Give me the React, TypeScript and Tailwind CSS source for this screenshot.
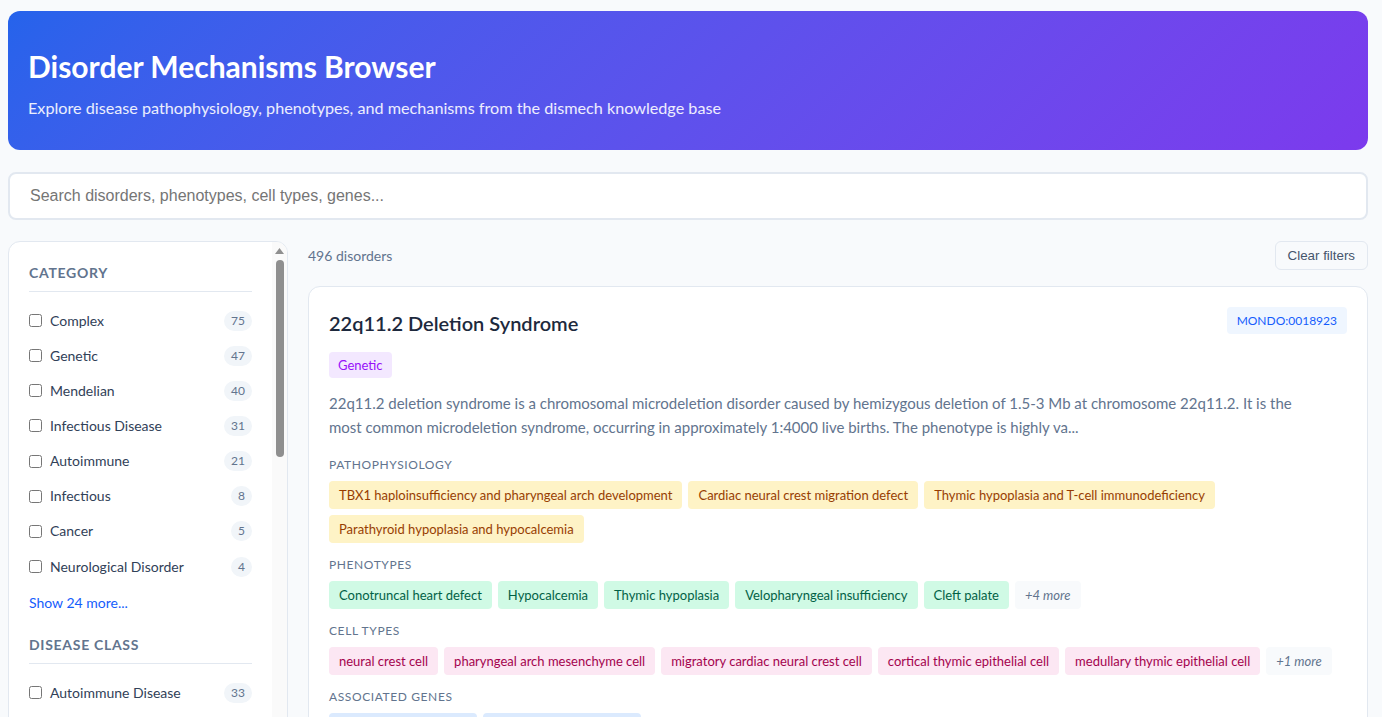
import React from "react";

type Item = [string, number];

const sections: { title: string; items: Item[]; more: number }[] = [
  {
    title: "Category",
    items: [
      ["Complex", 75],
      ["Genetic", 47],
      ["Mendelian", 40],
      ["Infectious Disease", 31],
      ["Autoimmune", 21],
      ["Infectious", 8],
      ["Cancer", 5],
      ["Neurological Disorder", 4],
    ],
    more: 24,
  },
  {
    title: "Disease Class",
    items: [
      ["Autoimmune Disease", 33],
      ["Cardiovascular Disease", 28],
      ["Metabolic Disease", 24],
      ["Neurodegenerative", 19],
      ["Immunodeficiency", 15],
      ["Developmental", 12],
      ["Respiratory Disease", 9],
      ["Skin Disease", 6],
    ],
    more: 41,
  },
  {
    title: "Inheritance",
    items: [
      ["Autosomal Dominant", 88],
      ["Autosomal Recessive", 72],
      ["X-linked Recessive", 21],
      ["Multifactorial", 18],
      ["X-linked Dominant", 7],
      ["Mitochondrial", 6],
      ["Sporadic", 5],
      ["Somatic", 3],
    ],
    more: 5,
  },
];

function Tag({ children, cls }: { children: React.ReactNode; cls: string }) {
  return <span className={"rounded px-2.5 py-1 text-[13px] leading-5 " + cls}>{children}</span>;
}

function Section({ label, children, first }: { label: string; children: React.ReactNode; first?: boolean }) {
  return (
    <div className={first ? "" : "mt-3.5"}>
      <div className="mb-2 text-xs leading-4 uppercase tracking-wider text-slate-500">{label}</div>
      <div className="flex flex-wrap gap-1.5">{children}</div>
    </div>
  );
}

function FakeScrollbar() {
  return (
    <div className="flex w-[15px] shrink-0 flex-col items-center bg-[#fafafa] pt-[6px]">
      <svg width="9" height="6" viewBox="0 0 9 6" className="block">
        <path d="M4.5 0 L9 6 L0 6 Z" fill="#8f8f8f" />
      </svg>
      <div className="mt-[6px] h-[197px] w-2 rounded-full bg-[#8f8f8f]" />
    </div>
  );
}

export default function App() {
  const amber = "bg-amber-100 text-amber-800";
  const green = "bg-emerald-100 text-emerald-800";
  const pink = "bg-pink-100 text-pink-800";
  const more = "bg-slate-50 text-slate-500 italic";
  const blue = "bg-blue-100 text-blue-800";

  return (
    <div className="h-screen overflow-hidden bg-[#f8fafc] pt-[11px] pl-2 pr-[14px] font-['Lato',sans-serif]">
      <header className="rounded-xl bg-linear-135 from-[#2563eb] to-[#7c3aed] px-5 pt-[35px] pb-[30px] text-white">
        <h1 className="text-3xl font-bold leading-10">Disorder Mechanisms Browser</h1>
        <p className="mt-[10px] text-[16.2px] leading-6 text-white/90">
          Explore disease pathophysiology, phenotypes, and mechanisms from the dismech knowledge base
        </p>
      </header>

      <input
        type="text"
        placeholder="Search disorders, phenotypes, cell types, genes..."
        className="mt-[22px] block h-12 w-full rounded-lg border-2 border-slate-200 bg-white px-5 font-['Liberation_Sans',Arial,sans-serif] text-base text-slate-700 outline-none placeholder:text-[#757575]"
      />

      <div className="mt-[21px] flex items-start gap-5">
        <aside className="flex h-[685px] w-[280px] shrink-0 overflow-hidden rounded-xl border border-slate-200 bg-white">
          <div className="min-w-0 flex-1 px-5 pt-[21px] pb-5">
            {sections.map((s, si) => (
              <div key={s.title} className={si === 0 ? "" : "mt-[22px]"}>
                <h3 className="border-b border-slate-200 pb-2 text-sm leading-5 font-bold uppercase tracking-wider text-slate-500">
                  {s.title}
                </h3>
                <ul className="mt-[11px]">
                  {s.items.map(([name, n]) => (
                    <li key={name} className="flex h-[35.15px] items-center justify-between">
                      <label className="flex items-center gap-2 text-sm leading-5 text-slate-700">
                        <input type="checkbox" className="m-0 h-[13px] w-[13px]" />
                        {name}
                      </label>
                      <span className="rounded-full bg-slate-100 px-[7px] py-0.5 text-xs leading-4 text-slate-500">
                        {n}
                      </span>
                    </li>
                  ))}
                </ul>
                <div className="mt-[9px] text-sm leading-5 text-blue-600">Show {s.more} more...</div>
              </div>
            ))}
          </div>
          <FakeScrollbar />
        </aside>

        <main className="min-w-0 flex-1">
          <div className="flex h-[29px] items-center justify-between">
            <span className="text-sm leading-5 text-slate-500">496 disorders</span>
            <button className="rounded-md border border-slate-200 bg-[#f8fafc] px-3 py-1.5 font-['Liberation_Sans',Arial,sans-serif] text-[13.33px] leading-[15px] text-slate-600">
              Clear filters
            </button>
          </div>

          <div className="mt-4 rounded-xl border border-slate-200 bg-white p-5">
            <div className="flex items-start justify-between">
              <h2 className="mt-[2px] text-xl leading-7 font-semibold text-slate-800">22q11.2 Deletion Syndrome</h2>
              <span className="rounded bg-blue-50 px-2.5 py-1 text-xs leading-[19px] text-blue-600">MONDO:0018923</span>
            </div>
            <div className="mt-[15px]">
              <span className="inline-block rounded bg-purple-100 px-[9px] py-1 text-[13px] leading-[18px] text-purple-600">
                Genetic
              </span>
            </div>
            <p className="mt-[13px] mb-[18px] max-w-[985px] text-[15px] leading-6 text-slate-500">
              22q11.2 deletion syndrome is a chromosomal microdeletion disorder caused by hemizygous deletion of 1.5-3 Mb at
              chromosome 22q11.2. It is the most common microdeletion syndrome, occurring in approximately 1:4000 live
              births. The phenotype is highly va...
            </p>

            <Section label="Pathophysiology" first>
              <Tag cls={amber}>TBX1 haploinsufficiency and pharyngeal arch development</Tag>
              <Tag cls={amber}>Cardiac neural crest migration defect</Tag>
              <Tag cls={amber}>Thymic hypoplasia and T-cell immunodeficiency</Tag>
              <Tag cls={amber}>Parathyroid hypoplasia and hypocalcemia</Tag>
            </Section>
            <Section label="Phenotypes">
              <Tag cls={green}>Conotruncal heart defect</Tag>
              <Tag cls={green}>Hypocalcemia</Tag>
              <Tag cls={green}>Thymic hypoplasia</Tag>
              <Tag cls={green}>Velopharyngeal insufficiency</Tag>
              <Tag cls={green}>Cleft palate</Tag>
              <Tag cls={more}>+4 more</Tag>
            </Section>
            <Section label="Cell Types">
              <Tag cls={pink}>neural crest cell</Tag>
              <Tag cls={pink}>pharyngeal arch mesenchyme cell</Tag>
              <Tag cls={pink}>migratory cardiac neural crest cell</Tag>
              <Tag cls={pink}>cortical thymic epithelial cell</Tag>
              <Tag cls={pink}>medullary thymic epithelial cell</Tag>
              <Tag cls={more}>+1 more</Tag>
            </Section>
            <Section label="Associated Genes">
              <Tag cls={blue}>TBX1 — HGNC:11592</Tag>
              <Tag cls={blue}>CRKL — HGNC:2363 (2)</Tag>
            </Section>
          </div>
        </main>
      </div>
    </div>
  );
}
